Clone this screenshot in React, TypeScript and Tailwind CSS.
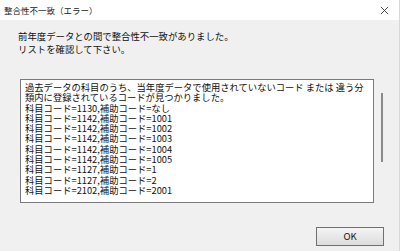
import React from 'react';

const lines = [
  '過去データの科目のうち、当年度データで使用されていないコード または 違う分',
  '類内に登録されているコードが見つかりました。',
  '科目コード=1130,補助コード=なし',
  '科目コード=1142,補助コード=1001',
  '科目コード=1142,補助コード=1002',
  '科目コード=1142,補助コード=1003',
  '科目コード=1142,補助コード=1004',
  '科目コード=1142,補助コード=1005',
  '科目コード=1127,補助コード=1',
  '科目コード=1127,補助コード=2',
  '科目コード=2102,補助コード=2001',
];

function App() {
  return (
    <div
      className="w-[400px] h-[251px] flex flex-col bg-[#f0f0f0] text-black overflow-hidden border-r border-[#d8d8d8]"
      style={{ fontFamily: '"Noto Sans CJK JP", "Noto Sans", sans-serif' }}
    >
      {/* Title bar */}
      <div className="h-[20px] bg-white flex items-center justify-between pl-[4px] pr-[10px] shrink-0">
        <span className="text-[8.5px] text-[#222] leading-none">整合性不一致（エラー）</span>
        <svg width="9" height="9" viewBox="0 0 10 10" className="text-[#333]">
          <path d="M1 1 L9 9 M9 1 L1 9" stroke="currentColor" strokeWidth="1" />
        </svg>
      </div>

      {/* Body */}
      <div className="flex-1 flex flex-col pl-[18px] pr-[14px]">
        <div className="pt-[10px] text-[9.4px] leading-[13px] text-[#111]">
          <div className="whitespace-nowrap">前年度データとの間で整合性不一致がありました。</div>
          <div className="whitespace-nowrap">リストを確認して下さい。</div>
        </div>

        <div className="mt-[23px] flex items-start">
          <div className="ml-[2px] w-[354px] h-[124px] bg-white border border-[#7a7a7a] pl-[4px] pt-[2px] text-[9.3px] leading-[10.3px] text-[#111] overflow-hidden">
            {lines.map((l, i) => (
              <div key={i} className="whitespace-nowrap">{l}</div>
            ))}
          </div>
          <div className="ml-[7px] mt-[14px] w-[2px] h-[69px] bg-[#8a8a8a]"></div>
        </div>

        <div className="flex justify-end mt-[24px]">
          <button className="w-[68px] h-[19px] mr-[1px] border border-[#707070] bg-gradient-to-b from-[#f4f4f4] to-[#dcdcdc] text-[9.5px] leading-none text-[#111]">
            OK
          </button>
        </div>
      </div>
    </div>
  );
}

export default App;
